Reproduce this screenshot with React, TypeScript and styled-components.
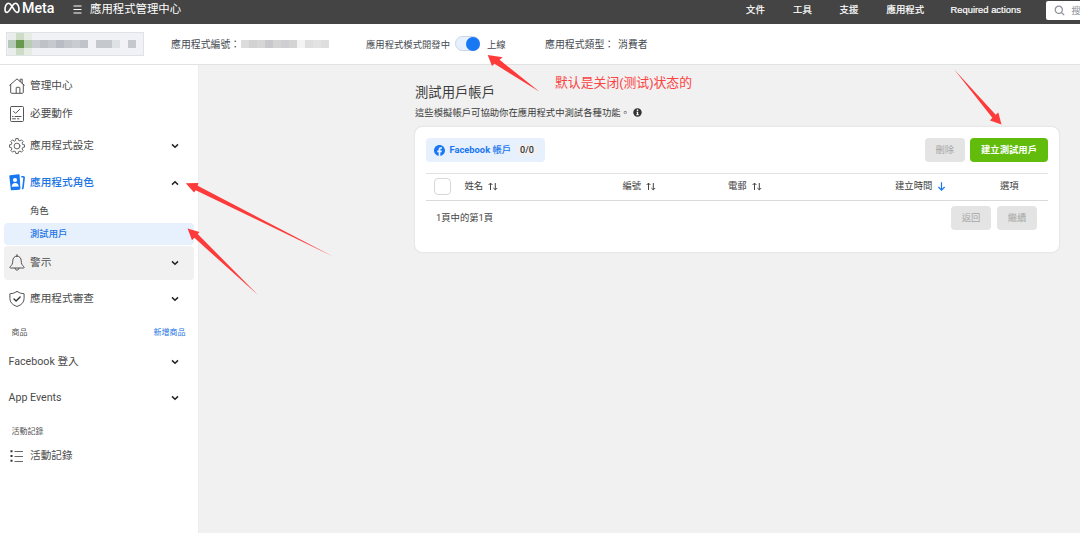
import React from 'react';
import styled, { createGlobalStyle } from 'styled-components';

const latin = `Roboto, "Noto Sans CJK TC", sans-serif`;

const GlobalStyle = createGlobalStyle`
  *, *::before, *::after { box-sizing: border-box; }
  body { margin: 0; background: #f1f1f1; font-family: ${latin}; color: #444; overflow: hidden; }
  button { font-family: inherit; padding: 0; border: 0; }
`;

const Page = styled.div`
  position: relative;
  width: 1080px;
  height: 533px;
  display: flex;
  flex-direction: column;
  overflow: hidden;
  white-space: nowrap;
`;

const TopBar = styled.header`
  height: 24px;
  flex: none;
  background: #444;
  color: #fff;
  display: flex;
  align-items: flex-start;
  padding-left: 4px;
`;

const Brand = styled.div`
  flex: none;
  display: flex;
  align-items: center;
  height: 16px;
  width: 69px;
  font: 500 14.2px/16px ${latin};
  gap: 2px;
`;

const MenuIcon = styled.svg`
  flex: none;
  width: 9px;
  height: 9px;
  margin-top: 5px;
`;

const AppTitle = styled.h1`
  flex: none;
  margin: 0 0 0 8px;
  font: 400 11.4px/18px ${latin};
  width: 656px;
`;

const Nav = styled.nav`
  flex: none;
  display: flex;
  font: 400 9.4px/20px "Liberation Sans", "Noto Sans CJK TC", sans-serif;
  -webkit-text-stroke: 0.2px #fff;
`;

const NavItem = styled.a<{ $w: number }>`
  width: ${(p) => p.$w}px;
`;

const Search = styled.div`
  flex: none;
  width: 60px;
  height: 19px;
  margin-top: 1px;
  padding-left: 8px;
  background: #fff;
  border-radius: 2px;
  color: #8a8f98;
  display: flex;
  align-items: center;
  gap: 7px;
  font-size: 9.3px;
  line-height: 19px;
`;

const InfoBar = styled.div`
  height: 41px;
  flex: none;
  background: #fff;
  border-bottom: 1px solid #e1e2e3;
  display: flex;
  align-items: center;
  padding: 0 0 1px 6px;
  font-size: 9.9px;
  color: #444950;
`;

const AppPicker = styled.div`
  width: 138px;
  height: 24px;
  margin-right: 27px;
  background: #f0f2f5;
  border: 1px solid #dfe2e7;
  display: flex;
  padding-left: 1px;
`;

const Mosaic = styled.i<{ $c: string; $edge?: string }>`
  width: 8px;
  height: ${(p) => (p.$edge ? 22 : 8)}px;
  margin-top: ${(p) => (p.$edge ? 0 : 7)}px;
  background: ${(p) =>
    p.$edge
      ? `linear-gradient(${p.$edge} 7px, ${p.$c} 7px, ${p.$c} 15px, ${p.$edge} 15px)`
      : p.$c};
`;

const Masked = styled.span`
  display: flex;
  height: 8px;
  width: 89px;
  margin: 0 36px 0 0;
  > i { margin: 0; }
`;

const InfoText = styled.span<{ $w: number; $size?: number }>`
  width: ${(p) => p.$w}px;
  font-size: ${(p) => p.$size ?? 9.9}px;
`;

const Toggle = styled.span`
  width: 25px;
  height: 15px;
  margin-right: 7px;
  border-radius: 8px;
  background: #e7f0fd;
  border: 1px solid #c9d6e8;
  display: flex;
  justify-content: flex-end;
  align-items: center;
  &::after {
    content: '';
    width: 14px;
    height: 14px;
    flex: none;
    border-radius: 50%;
    background: #1877f2;
    margin-right: -1px;
  }
`;

const Body = styled.div`
  flex: 1;
  display: flex;
`;

const Sidebar = styled.aside`
  width: 199px;
  background: #fff;
  padding: 6.5px 4.5px 0 3.5px;
  border-right: 1px solid #ececec;
`;

const SideRow = styled.div<{ $h?: number; $mt?: number; $bg?: string; $color?: string }>`
  height: ${(p) => p.$h ?? 34}px;
  margin-top: ${(p) => p.$mt ?? 0}px;
  padding: 0 15px 0 5px;
  border-radius: 4px;
  background: ${(p) => p.$bg ?? 'transparent'};
  color: ${(p) => p.$color ?? '#4b4b4b'};
  display: flex;
  align-items: center;
  font-size: 10.67px;
  line-height: 16px;
  > svg:first-child { margin-right: 5.5px; flex: none; }
`;

const SideLabel = styled.span<{ $medium?: boolean }>`
  flex: 1;
  font-weight: ${(p) => (p.$medium ? 500 : 400)};
`;

const SubRow = styled.div<{ $active?: boolean }>`
  height: 22px;
  margin-bottom: 1px;
  padding-left: 26.5px;
  border-radius: 4px;
  font-size: 9.33px;
  line-height: 21px;
  font-weight: ${(p) => (p.$active ? 500 : 400)};
  background: ${(p) => (p.$active ? '#e7f0fd' : 'transparent')};
  color: ${(p) => (p.$active ? '#1b74e4' : '#444')};
`;

const SectionHead = styled.div<{ $mt: number; $mb: number }>`
  display: flex;
  justify-content: space-between;
  margin: ${(p) => p.$mt}px 8px ${(p) => p.$mb}px 8px;
  height: 16px;
  font-size: 8px;
  line-height: 15px;
  color: #555;
  > a { color: #1b74e4; }
`;

const Main = styled.main`
  flex: 1;
  padding: 18px 21px 0 216px;
`;

const Heading = styled.h2`
  margin: 0;
  font-weight: 400;
  font-size: 13.33px;
  line-height: 19px;
  color: #3c3c3c;
`;

const Description = styled.p`
  margin: 1px 0 5px;
  height: 18px;
  display: flex;
  align-items: center;
  gap: 3px;
  font-size: 9.36px;
  color: #3c3c3c;
`;

const Card = styled.section`
  width: 644px;
  height: 125px;
  margin-top: 6px;
  padding: 11px 11px 0;
  background: #fff;
  border-radius: 7px;
  box-shadow: 0 0 2px rgba(0, 0, 0, 0.16);
`;

const Toolbar = styled.div`
  display: flex;
  gap: 5px;
  height: 24px;
`;

const AccountTab = styled.div`
  width: 119px;
  height: 24px;
  margin-right: auto;
  padding-left: 7.5px;
  border-radius: 4px;
  background: #e7f0fd;
  color: #1877f2;
  display: flex;
  align-items: center;
  font-size: 9.33px;
  font-weight: 700;
  line-height: 12px;
  > svg { margin-right: 5px; }
`;

const TabLabel = styled.span`
  padding-bottom: 1px;
  > b { font-weight: 500; }
`;

const Count = styled.span`
  margin-left: 5px;
  padding: 0 4px;
  border-radius: 6px;
  font-size: 9px;
  line-height: 12px;
  font-weight: 500;
  color: #333;
  background: #f0f0f0;
`;

const Button = styled.button<{ $w: number; $primary?: boolean }>`
  width: ${(p) => p.$w}px;
  height: 24px;
  border-radius: 4px;
  font-size: 9.33px;
  line-height: 24px;
  padding-bottom: 0;
  font-weight: ${(p) => (p.$primary ? 700 : 400)};
  color: ${(p) => (p.$primary ? '#fff' : '#a6a6a6')};
  background: ${(p) => (p.$primary ? '#62bc0c' : '#e4e4e4')};
`;

const HeaderRow = styled.div`
  margin-top: 11px;
  height: 28px;
  padding-bottom: 2px;
  border-top: 1px solid #e1e1e1;
  border-bottom: 1px solid #dadada;
  display: grid;
  grid-template-columns: 38.5px 158px 105.5px 167px 105px 1fr;
  align-items: center;
  font-size: 9.33px;
  font-weight: 400;
  color: #3c3c3c;
`;

const HeaderCell = styled.span`
  display: flex;
  align-items: center;
  gap: 5px;
  line-height: 14px;
  padding-bottom: 1px;
  > svg { position: relative; top: 1px; }
`;

const Checkbox = styled.span`
  width: 17px;
  height: 17px;
  margin-left: 8px;
  border: 1px solid #d8d8d8;
  border-radius: 4px;
`;

const Footer = styled.div`
  display: flex;
  gap: 6px;
  align-items: center;
  padding: 5px 11px 0 10px;
  font-size: 9.33px;
`;

const PageInfo = styled.span`
  margin-right: auto;
  padding-bottom: 2px;
  color: #444;
`;

const Annotations = styled.svg`
  position: absolute;
  inset: 0;
  pointer-events: none;
`;

const Note = styled.div`
  position: absolute;
  left: 555px;
  top: 73px;
  font: 400 12.85px/20px "Liberation Sans", "Noto Sans CJK SC", sans-serif;
  color: #fb4343;
`;

const Chevron = ({ up }: { up?: boolean }) => (
  <svg width="8" height="6" viewBox="0 0 8 6" fill="none" stroke="#222" strokeWidth="1.5">
    <path d={up ? 'M1 4.6 4 1.8 7 4.6' : 'M1 1.4 4 4.2 7 1.4'} />
  </svg>
);

const line = { fill: 'none', stroke: '#555', strokeWidth: 1, strokeLinejoin: 'round' as const, strokeLinecap: 'round' as const };

const HomeIcon = () => (
  <svg width="16" height="16" viewBox="0 0 16 16" {...line}>
    <path d="M.7 7.2 8 .9l7.3 6.3M1.7 6.4v7.9q0 1 1 1h10.600q1 0 1-1V6.400M11.200 3.500V1.200h2v4.100M7.200 15.200V9.900q0-.6.6-.6h2.500q.6 0 .6.6v5.300" />
  </svg>
);

const ChecklistIcon = () => (
  <svg width="16" height="16" viewBox="0 0 16 16" {...line}>
    <rect x="1.500" y=".5" width="13" height="15" rx="1" />
    <path d="M4.500 5.300 6.500 7.300 10.700 3.400M3.500 10.500h.6M6 10.500h6M3.500 12.800h3M8.500 12.800h1.500" />
  </svg>
);

const gear = Array.from({ length: 8 }, (_, i) => {
  const at = (deg: number, r: number) => {
    const a = ((i * 45 + deg) * Math.PI) / 180;
    return `${(8 + r * Math.sin(a)).toFixed(2)},${(8 - r * Math.cos(a)).toFixed(2)}`;
  };
  return [at(-14, 5.9), at(-9, 7.6), at(9, 7.6), at(14, 5.9)].join(' ');
}).join(' ');

const GearIcon = () => (
  <svg width="16" height="16" viewBox="0 0 16 16" {...line} strokeWidth={0.9}>
    <polygon points={gear} />
    <circle cx="8" cy="8" r="2.900" />
  </svg>
);

const RolesIcon = () => (
  <svg width="16" height="17" viewBox="0 0 16 17">
    <path d="M.3 2.300Q.2 1.400 1.100 1.300L9.500.2q1-.1 1.100.9l.8 13.500q0 1-1 1.100l-7.500.6q-1 .1-1.100-.9z" fill="#1877f2" />
    <path d="M12.300 2.800h1.900q1 .1.900 1.100l-1.100 9.700q-.1.900-1.100 1" fill="none" stroke="#1877f2" strokeWidth="1.600" />
    <circle cx="6" cy="6" r="2.100" fill="#fff" />
    <path d="M2.700 12.800q.3-3.600 3.400-3.700 3-.1 3.700 3.300z" fill="#fff" />
  </svg>
);

const BellIcon = () => (
  <svg width="16" height="17" viewBox="0 0 16 17" {...line}>
    <path d="M8 .6v1.500M8 2.100c-3 0-4.100 2.200-4.200 4.700-.1 3-.9 4.600-2.700 5.900-.6.600-.4 1.300.4 1.300h13c.8 0 1-.7.4-1.300-1.800-1.300-2.600-2.900-2.700-5.900C12.100 4.300 11 2.100 8 2.100zM6 14.200q.4 2 2 2t2-2" />
  </svg>
);

const ShieldIcon = () => (
  <svg width="16" height="16" viewBox="0 0 16 16" {...line}>
    <path d="M8 .5q3 2.200 7.100 2.300v4.700q0 5.600-7.100 8-7.100-2.400-7.100-8V2.800Q5 2.700 8 .5z" />
    <path d="M5 8.100 7.100 10.100 11.100 6.100" stroke="#333" strokeWidth="1.400" />
  </svg>
);

const ListIcon = () => (
  <svg width="16" height="14" viewBox="0 0 16 14">
    <path d="M1.500 1.200h2v2h-2zM1.500 6h2v2h-2zM1.500 10.800h2v2h-2z" fill="#333" />
    <path d="M5.500 2.500h8.500M5.500 7.500h8.500M5.500 12.500h8.500" stroke="#666" />
  </svg>
);

const SortIcon = () => (
  <svg width="10" height="9" viewBox="0 0 10 9" fill="none" stroke="#444" strokeWidth="1">
    <path d="M2.500 8V1.200M.6 3l1.900-1.900L4.400 3M7.300 1v6.800M5.400 6l1.900 1.900L9.200 6" />
  </svg>
);

const DownIcon = () => (
  <svg width="9" height="9" viewBox="0 0 9 9" fill="none" stroke="#1877f2" strokeWidth="1.200">
    <path d="M4.500.3v7.700M1.400 5l3.100 3.100L7.600 5" />
  </svg>
);

const appBlocks = ['#c9ccd0', '#bfc2c7', '#c6c9ce', '#b9bcc2', '#c3c6ca', '#c9ccd0', '#c0c3c9', '#f0f2f5', '#c5c9ce', '#c5c9ce', '#dfe2e5', '#f0f2f5', '#c5c9ce'];
const idBlocks = ['#dcdcdd', '#d2d2d3', '#d6d6d7', '#c9c9cb', '#d4d4d5', '#cfcfd1', '#d4d4d5', '#f3f3f3', '#dededf', '#e3e3e3', '#dedede'];

export default function App() {
  return (
    <>
      <GlobalStyle />
      <Page>
        <TopBar>
          <Brand>
            <svg width="16" height="12" viewBox="0 0 16 12" fill="none" stroke="#fff" strokeWidth="1.600">
              <path d="M8 4.200C6.700 2.200 5.700 1.200 4.500 1.200 2.500 1.200 1 4.300 1 7.400 1 9.300 1.800 10.400 3 10.400 5 10.400 6.400 7 8 4.200 9.300 2.200 10.300 1.200 11.500 1.200 13.500 1.200 15 4.300 15 7.400 15 9.300 14.200 10.400 13 10.400 11 10.400 9.600 7 8 4.200z" />
            </svg>
            Meta
          </Brand>
          <MenuIcon viewBox="0 0 9 9" stroke="#fff" strokeWidth="1.100">
            <path d="M.5 1h8M.5 4.500h8M.5 8h8" />
          </MenuIcon>
          <AppTitle>應用程式管理中心</AppTitle>
          <Nav>
            <NavItem $w={47}>文件</NavItem>
            <NavItem $w={46.5}>工具</NavItem>
            <NavItem $w={47}>支援</NavItem>
            <NavItem $w={64}>應用程式</NavItem>
            <NavItem $w={95}>Required actions</NavItem>
          </Nav>
          <Search>
            <svg width="11" height="11" viewBox="0 0 11 11" fill="none" stroke="#8a8f98" strokeWidth="1.200">
              <circle cx="4.800" cy="4.800" r="3.600" />
              <path d="m7.500 7.500 2.700 2.700" />
            </svg>
            搜尋
          </Search>
        </TopBar>

        <InfoBar>
          <AppPicker>
            <Mosaic $c="#b5c9b8" $edge="#e9eeeb" />
            <Mosaic $c="#68994f" $edge="#ccdcc5" />
            <Mosaic $c="#b9cdb5" $edge="#e6ece4" />
            {appBlocks.map((c, i) => (
              <Mosaic key={i} $c={c} />
            ))}
          </AppPicker>
          <InfoText $w={70}>應用程式編號：</InfoText>
          <Masked>
            {idBlocks.map((c, i) => (
              <Mosaic key={i} $c={c} />
            ))}
          </Masked>
          <InfoText $w={89} $size={9.33}>應用程式模式開發中</InfoText>
          <Toggle />
          <InfoText $w={58} $size={9.33}>上線</InfoText>
          <InfoText $w={73}>應用程式類型：</InfoText>
          <span>消費者</span>
        </InfoBar>

        <Body>
          <Sidebar>
            <SideRow $h={28}><HomeIcon /><SideLabel>管理中心</SideLabel></SideRow>
            <SideRow $h={28} $mt={0.5}><ChecklistIcon /><SideLabel>必要動作</SideLabel></SideRow>
            <SideRow $mt={1}><GearIcon /><SideLabel>應用程式設定</SideLabel><Chevron /></SideRow>
            <SideRow $mt={2.5} $color="#1b74e4"><RolesIcon /><SideLabel $medium>應用程式角色</SideLabel><Chevron up /></SideRow>
            <SubRow>角色</SubRow>
            <SubRow $active>測試用戶</SubRow>
            <SideRow $mt={1} $bg="#f1f1f1"><BellIcon /><SideLabel>警示</SideLabel><Chevron /></SideRow>
            <SideRow $mt={2.5}><ShieldIcon /><SideLabel>應用程式審查</SideLabel><Chevron /></SideRow>
            <SectionHead $mt={9} $mb={4}><span>商品</span><a>新增商品</a></SectionHead>
            <SideRow><SideLabel>Facebook 登入</SideLabel><Chevron /></SideRow>
            <SideRow $mt={2}><SideLabel>App Events</SideLabel><Chevron /></SideRow>
            <SectionHead $mt={9} $mb={2}><span>活動記錄</span></SectionHead>
            <SideRow $h={28}><ListIcon /><SideLabel>活動記錄</SideLabel></SideRow>
          </Sidebar>

          <Main>
            <Heading>測試用戶帳戶</Heading>
            <Description>
              這些模擬帳戶可協助你在應用程式中測試各種功能。
              <svg width="9" height="9" viewBox="0 0 9 9">
                <circle cx="4.500" cy="4.500" r="4.200" fill="#333" />
                <path d="M3.800 1.600h1.400v1.300H3.800zM3.400 3.700h1.800v2.600h.6v1H3.300v-1h.6V4.600h-.5z" fill="#fff" />
              </svg>
            </Description>
            <Card>
              <Toolbar>
                <AccountTab>
                  <svg width="11" height="11" viewBox="0 0 24 24" fill="#1877f2">
                    <path d="M24 12.070C24 5.410 18.630 0 12 0S0 5.410 0 12.070C0 18.100 4.390 23.090 10.130 24v-8.440H7.080v-3.490h3.040V9.410c0-3.020 1.790-4.690 4.530-4.690 1.310 0 2.680.24 2.680.24v2.970h-1.510c-1.490 0-1.960.93-1.960 1.890v2.260h3.330l-.53 3.490h-2.800V24C19.610 23.090 24 18.100 24 12.070z" />
                  </svg>
                  <TabLabel>Facebook <b>帳戶</b></TabLabel>
                  <Count>0/0</Count>
                </AccountTab>
                <Button $w={40.5}>刪除</Button>
                <Button $w={78} $primary>建立測試用戶</Button>
              </Toolbar>
              <HeaderRow>
                <Checkbox />
                <HeaderCell>姓名 <SortIcon /></HeaderCell>
                <HeaderCell>編號 <SortIcon /></HeaderCell>
                <HeaderCell>電郵 <SortIcon /></HeaderCell>
                <HeaderCell>建立時間 <DownIcon /></HeaderCell>
                <HeaderCell>選項</HeaderCell>
              </HeaderRow>
              <Footer>
                <PageInfo>1頁中的第1頁</PageInfo>
                <Button $w={40}>返回</Button>
                <Button $w={40}>繼續</Button>
              </Footer>
            </Card>
          </Main>
        </Body>

        <Note>默认是关闭(测试)状态的</Note>
        <Annotations width="1080" height="533" viewBox="0 0 1080 533" fill="#fd3b3b">
          <polygon points="487.700,55 502.700,57.300 499.600,59.800 539.500,91.800 494.500,63.800 492,66" />
          <polygon points="1001.500,124.600 998.300,112.600 995.700,114.800 954,69.300 992.300,117.800 990,120.400" />
          <polygon points="185.800,183.200 198.300,182.900 197.700,185.800 333,256.500 195.700,190.200 194,192.500" />
          <polygon points="187.600,228.500 199.500,232 197.700,234 258.500,295.500 194.300,237.800 192,240.200" />
        </Annotations>
      </Page>
    </>
  );
}
